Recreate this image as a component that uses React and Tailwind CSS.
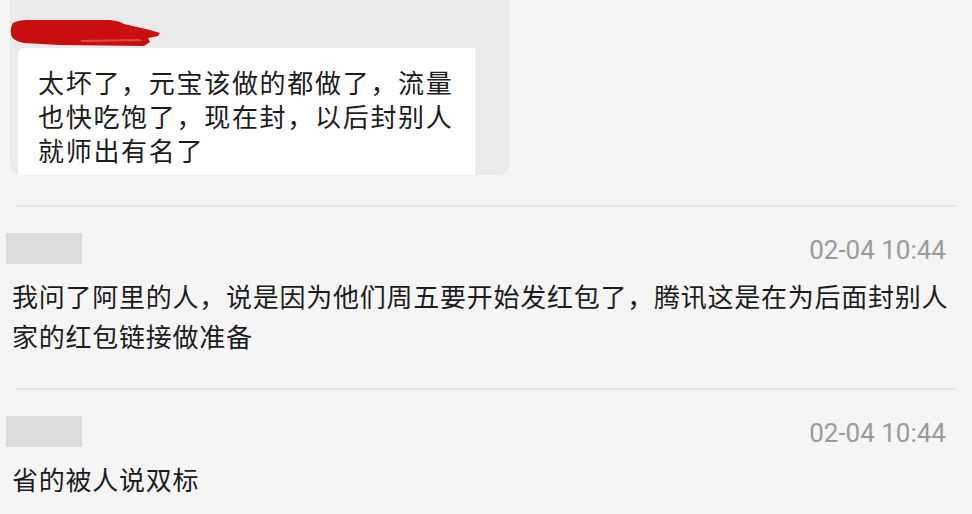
const COMMENTS = [
  {
    time: '02-04 10:44',
    lines: ['我问了阿里的人，说是因为他们周五要开始发红包了，腾讯这是在为后面封别人', '家的红包链接做准备'],
  },
  {
    time: '02-04 10:44',
    lines: ['省的被人说双标'],
  },
];

const QUOTE = ['太坏了，元宝该做的都做了，流量', '也快吃饱了，现在封，以后封别人', '就师出有名了'];

function Scribble() {
  return (
    <svg width="160" height="30" viewBox="0 0 160 30" className="block">
      <path
        d="M3 5 Q8 2 18 2 L100 2 Q110 3 114 6 L140 12 L150 15 L148 18 L138 20 L140 24 L134 28 L50 27 L14 25 Q3 23 1 17 Q0 9 3 5 Z"
        fill="#c80f0d"
      />
      <path d="M70 22 L130 21 L132 23 L72 24 Z" fill="#e8706c" opacity="0.6" />
    </svg>
  );
}

export default function App() {
  return (
    <div
      className="w-[972px] h-[514px] overflow-hidden bg-[#f5f5f5] text-[#1c1c1c]"
      style={{ fontFamily: '"Noto Sans CJK SC", "Noto Sans", sans-serif' }}
    >
      {/* quoted message */}
      <div className="ml-[10px] w-[499px] h-[175px] bg-[#ebebeb] rounded-b-[10px] flex flex-col">
        <div className="mt-[18px]">
          <Scribble />
        </div>
        <div className="ml-[8px] w-[457px] flex-1 bg-white rounded-tl-[6px] pl-[20px] pt-[17px] text-[26px] leading-[34px] tracking-[1.7px]">
          {QUOTE.map((line) => (
            <div key={line}>{line}</div>
          ))}
        </div>
      </div>

      {/* comments */}
      {COMMENTS.map((c, i) => (
        <div key={i} className={i === 0 ? 'mt-[30px]' : 'mt-[32px]'}>
          <div className="mx-[15px] h-[2px] bg-[#e7e7e7]" />
          <div className="flex items-center justify-between mt-[19px] pl-[6px] pr-[26px]">
            <div className="w-[76px] h-[31px] bg-[#dcdcdc]" />
            <span
              className="text-[26px] text-[#9b9b9b] mt-[5px]"
              style={{ fontFamily: 'Roboto, "Liberation Sans", sans-serif' }}
            >
              {c.time}
            </span>
          </div>
          <div className="pl-[12px] mt-[6px] text-[26px] leading-[40px] tracking-[0.75px]">
            {c.lines.map((line) => (
              <div key={line}>{line}</div>
            ))}
          </div>
        </div>
      ))}
    </div>
  );
}
